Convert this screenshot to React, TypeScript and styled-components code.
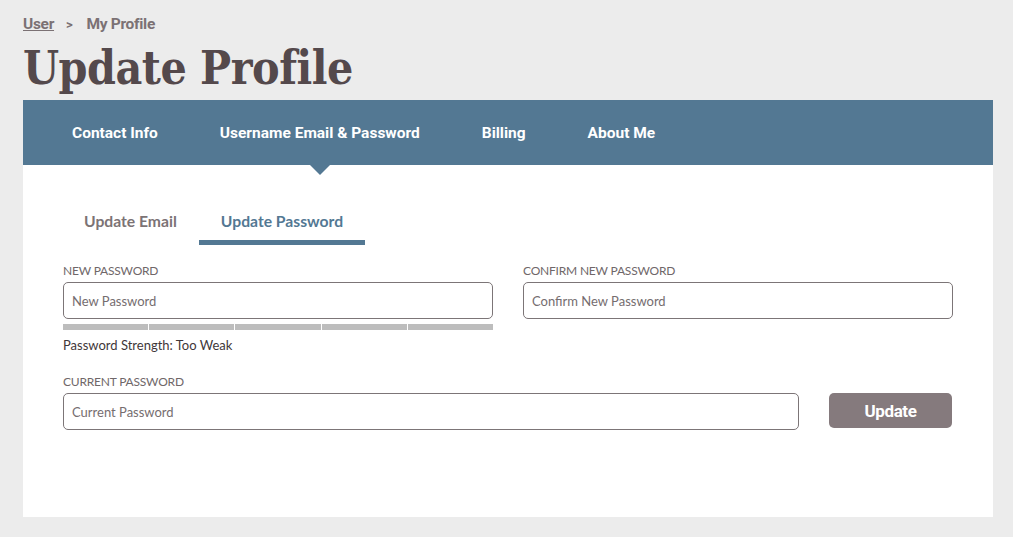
import { useState } from "react";
import styled, { createGlobalStyle } from "styled-components";

const GlobalStyle = createGlobalStyle`
  html, body {
    margin: 0;
    padding: 0;
    background: #ececec;
  }
  body {
    font-family: Lato, "Open Sans", sans-serif;
  }
  * {
    box-sizing: border-box;
  }
`;

const Page = styled.div`
  padding: 15px 20px 20px 23px;
  width: 1013px;
`;

const Breadcrumb = styled.div`
  display: flex;
  align-items: center;
  gap: 10px;
  height: 18px;
  font-family: Roboto, sans-serif;
  font-weight: 700;
  font-size: 15.5px;
  letter-spacing: -0.3px;
  color: #7b7174;
  a {
    color: #7b7174;
    text-decoration: underline;
  }
  span.sep {
    font-size: 13px;
    margin: 0 4px 0 2px;
  }
`;

const Title = styled.h1`
  margin: 0;
  padding-top: 3px;
  height: 67px;
  line-height: 64px;
  font-family: "DejaVu Serif Condensed", "DejaVu Serif", serif;
  font-weight: 700;
  font-size: 46px;
  letter-spacing: -0.5px;
  color: #54494c;
`;

const Panel = styled.section`
  width: 970px;
  background: #ffffff;
`;

const Nav = styled.nav`
  display: flex;
  height: 65px;
  padding-left: 18px;
  background: #537893;
`;

const NavItem = styled.a<{ $active?: boolean }>`
  position: relative;
  display: flex;
  align-items: center;
  padding: 0 31px;
  font-family: Roboto, sans-serif;
  font-weight: 700;
  font-size: 15.5px;
  color: #ffffff;
  cursor: pointer;
  &::after {
    content: "";
    display: ${(p) => (p.$active ? "block" : "none")};
    position: absolute;
    left: 50%;
    bottom: -10px;
    margin-left: -10px;
    border-left: 10px solid transparent;
    border-right: 10px solid transparent;
    border-top: 10px solid #537893;
  }
`;

const Content = styled.div`
  padding: 38px 40px 87px;
`;

const Tabs = styled.div`
  display: flex;
  margin-left: -1px;
`;

const Tab = styled.button<{ $active?: boolean }>`
  border: none;
  background: none;
  padding: 8px 22px 9px;
  line-height: 20px;
  font-family: Lato, sans-serif;
  font-weight: 700;
  font-size: 15.7px;
  color: ${(p) => (p.$active ? "#537893" : "#7c7375")};
  border-bottom: 5px solid ${(p) => (p.$active ? "#537893" : "transparent")};
  cursor: pointer;
`;

const Grid = styled.div`
  display: grid;
  grid-template-columns: 1fr 1fr;
  gap: 30px;
  margin-top: 18px;
`;

const Field = styled.div`
  display: flex;
  flex-direction: column;
`;

const Label = styled.label`
  height: 16px;
  line-height: 16px;
  margin-bottom: 3px;
  font-family: Lato, sans-serif;
  font-size: 12px;
  color: #6f6769;
  text-transform: uppercase;
  letter-spacing: -0.2px;
`;

const Input = styled.input`
  width: 100%;
  height: 37px;
  padding: 0 8px;
  border: 1px solid #7c7577;
  border-radius: 5px;
  font-family: Lato, sans-serif;
  font-size: 13px;
  color: #3f3739;
  outline: none;
  &::placeholder {
    color: #756d6f;
  }
`;

const Strength = styled.div`
  display: flex;
  gap: 1px;
  margin-top: 5px;
  height: 6px;
`;

const Segment = styled.div<{ $on?: boolean }>`
  flex: 1;
  background: ${(p) => (p.$on ? "#537893" : "#bdbdbd")};
`;

const StrengthText = styled.div`
  margin-top: 7px;
  height: 16px;
  line-height: 16px;
  font-family: Lato, sans-serif;
  font-size: 13px;
  color: #3f3739;
`;

const Row = styled.div`
  display: flex;
  align-items: flex-start;
  gap: 30px;
  margin-top: 21px;
  padding-right: 1px;
`;

const Grow = styled(Field)`
  flex: 1;
`;

const Button = styled.button`
  width: 123px;
  height: 35px;
  margin-top: 19px;
  border: none;
  border-radius: 5px;
  background: #857a7d;
  color: #ffffff;
  font-family: Roboto, sans-serif;
  font-weight: 700;
  font-size: 17px;
  letter-spacing: -0.4px;
  cursor: pointer;
`;

const navItems = ["Contact Info", "Username Email & Password", "Billing", "About Me"];

export default function App() {
  const [tab, setTab] = useState("password");
  return (
    <>
      <GlobalStyle />
      <Page>
        <Breadcrumb>
          <a>User</a>
          <span className="sep">&gt;</span>
          <span>My Profile</span>
        </Breadcrumb>
        <Title>Update Profile</Title>
        <Panel>
          <Nav>
            {navItems.map((item) => (
              <NavItem key={item} $active={item === "Username Email & Password"}>
                {item}
              </NavItem>
            ))}
          </Nav>
          <Content>
            <Tabs>
              <Tab $active={tab === "email"} onClick={() => setTab("email")}>
                Update Email
              </Tab>
              <Tab $active={tab === "password"} onClick={() => setTab("password")}>
                Update Password
              </Tab>
            </Tabs>
            <Grid>
              <Field>
                <Label>New Password</Label>
                <Input type="password" placeholder="New Password" />
                <Strength>
                  {[0, 1, 2, 3, 4].map((i) => (
                    <Segment key={i} />
                  ))}
                </Strength>
                <StrengthText>Password Strength: Too Weak</StrengthText>
              </Field>
              <Field>
                <Label>Confirm New Password</Label>
                <Input type="password" placeholder="Confirm New Password" />
              </Field>
            </Grid>
            <Row>
              <Grow>
                <Label>Current Password</Label>
                <Input type="password" placeholder="Current Password" />
              </Grow>
              <Button>Update</Button>
            </Row>
          </Content>
        </Panel>
      </Page>
    </>
  );
}
